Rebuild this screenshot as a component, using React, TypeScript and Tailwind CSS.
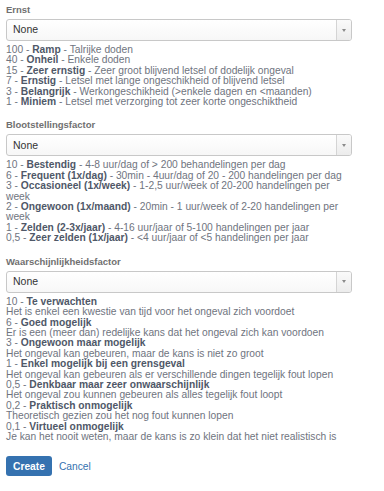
import React from "react";

type Item = { value: string; title: string; text?: string };

const ernst: Item[] = [
  { value: "100", title: "Ramp", text: "Talrijke doden" },
  { value: "40", title: "Onheil", text: "Enkele doden" },
  { value: "15", title: "Zeer ernstig", text: "Zeer groot blijvend letsel of dodelijk ongeval" },
  { value: "7", title: "Ernstig", text: "Letsel met lange ongeschikheid of blijvend letsel" },
  { value: "3", title: "Belangrijk", text: "Werkongeschikheid (>enkele dagen en <maanden)" },
  { value: "1", title: "Miniem", text: "Letsel met verzorging tot zeer korte ongeschiktheid" },
];

const blootstelling: Item[] = [
  { value: "10", title: "Bestendig", text: "4-8 uur/dag of > 200 behandelingen per dag" },
  { value: "6", title: "Frequent (1x/dag)", text: "30min - 4uur/dag of 20 - 200 handelingen per dag" },
  { value: "3", title: "Occasioneel (1x/week)", text: "1-2,5 uur/week of 20-200 handelingen per week" },
  { value: "2", title: "Ongewoon (1x/maand)", text: "20min - 1 uur/week of 2-20 handelingen per week" },
  { value: "1", title: "Zelden (2-3x/jaar)", text: "4-16 uur/jaar of 5-100 handelingen per jaar" },
  { value: "0,5", title: "Zeer zelden (1x/jaar)", text: "<4 uur/jaar of <5 handelingen per jaar" },
];

const waarschijnlijkheid: Item[] = [
  { value: "10", title: "Te verwachten", text: "Het is enkel een kwestie van tijd voor het ongeval zich voordoet" },
  { value: "6", title: "Goed mogelijk", text: "Er is een (meer dan) redelijke kans dat het ongeval zich kan voordoen" },
  { value: "3", title: "Ongewoon maar mogelijk", text: "Het ongeval kan gebeuren, maar de kans is niet zo groot" },
  { value: "1", title: "Enkel mogelijk bij een grensgeval", text: "Het ongeval kan gebeuren als er verschillende dingen tegelijk fout lopen" },
  { value: "0,5", title: "Denkbaar maar zeer onwaarschijnlijk", text: "Het ongeval zou kunnen gebeuren als alles tegelijk fout loopt" },
  { value: "0,2", title: "Praktisch onmogelijk", text: "Theoretisch gezien zou het nog fout kunnen lopen" },
  { value: "0,1", title: "Virtueel onmogelijk", text: "Je kan het nooit weten, maar de kans is zo klein dat het niet realistisch is" },
];

const SelectBox = () => (
  <div className="flex h-[22px] w-[346px] items-stretch overflow-hidden rounded-[3px] border border-[#c8c8c8] bg-gradient-to-b from-white to-[#f7f7f7]">
    <div className="flex flex-1 items-center pl-[6px] text-[10.5px] text-[#333333]">None</div>
    <div className="flex w-[15px] items-center justify-center border-l border-[#d4d4d4] bg-gradient-to-b from-[#fafafa] to-[#ececec]">
      <span className="block h-0 w-0 border-x-[2.5px] border-t-[3px] border-x-transparent border-t-[#8a8a8a]" />
    </div>
  </div>
);

const Field = ({
  label,
  items,
  stacked,
}: {
  label: string;
  items: Item[];
  stacked?: boolean;
}) => (
  <div className="mb-[12px]">
    <div className="mb-[3px] text-[9.5px] font-bold leading-[12px] text-[#707070]">{label}</div>
    <SelectBox />
    <div className="mt-[4px] w-[346px] text-[10.25px] leading-[10.4px] text-[#6f7480]">
      {items.map((item) =>
        stacked ? (
          <div key={item.value + item.title}>
            <div>
              {item.value} - <b className="font-bold text-[#4f5868]">{item.title}</b>
            </div>
            <div>{item.text}</div>
          </div>
        ) : (
          <div key={item.value + item.title}>
            {item.value} - <b className="font-bold text-[#4f5868]">{item.title}</b> - {item.text}
          </div>
        )
      )}
    </div>
  </div>
);

export default function App() {
  return (
    <div
      className="min-h-[491px] w-[384px] bg-white pl-[6px] pt-[4px]"
      style={{ fontFamily: '"Liberation Sans", Arial, sans-serif' }}
    >
      <Field label="Ernst" items={ernst} />
      <Field label="Blootstellingsfactor" items={blootstelling} />
      <Field label="Waarschijnlijkheidsfactor" items={waarschijnlijkheid} stacked />
      <div className="mt-[14px] flex items-center gap-[7px]">
        <button className="h-[20px] rounded-[3px] bg-[#3572b0] px-[7px] text-[10.25px] font-bold text-white">
          Create
        </button>
        <a href="#" className="text-[10.25px] text-[#3572b0]">
          Cancel
        </a>
      </div>
    </div>
  );
}
